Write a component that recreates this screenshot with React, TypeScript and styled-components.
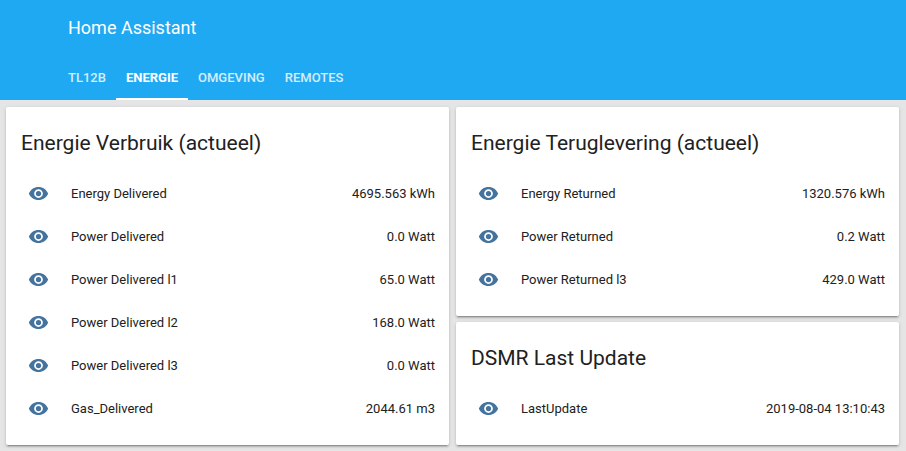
import React from "react";
import styled, { createGlobalStyle } from "styled-components";

const GlobalStyle = createGlobalStyle`
  * { box-sizing: border-box; }
  body {
    margin: 0;
    background: #e5e5e5;
    color: #212121;
    font-family: Roboto, "Noto Sans", sans-serif;
    font-size: 13px;
    -webkit-font-smoothing: antialiased;
  }
`;

const Header = styled.header`
  background: #1fa9f2;
  color: #fff;
  padding-left: 58px;
`;

const AppTitle = styled.div`
  padding: 0 10px;
  font-size: 18px;
  line-height: 56px;
`;

const Tabs = styled.nav`
  display: flex;
`;

const Tab = styled.button<{ $active: boolean }>`
  border: 0;
  background: none;
  box-shadow: ${(p) => (p.$active ? "inset 0 -2px #fff" : "none")};
  color: #fff;
  padding: 0 10px;
  font-family: inherit;
  font-size: 13px;
  line-height: 44px;
  font-weight: ${(p) => (p.$active ? 700 : 500)};
  opacity: ${(p) => (p.$active ? 1 : 0.8)};
  text-transform: uppercase;
  cursor: pointer;
`;

const Board = styled.main`
  display: grid;
  grid-template-columns: 1fr 1fr;
  align-items: start;
  gap: 7px;
  padding: 7px 7px 5px 6px;
`;

const Column = styled.div`
  display: flex;
  flex-direction: column;
  gap: 6px;
`;

const CardBox = styled.section`
  background: #fff;
  border-radius: 2px;
  padding: 0 14px 19px 15px;
  box-shadow: 0 2px 2px rgba(0, 0, 0, 0.14), 0 1px 4px rgba(0, 0, 0, 0.12),
    0 3px 1px -2px rgba(0, 0, 0, 0.2);
`;

const CardTitle = styled.h2`
  margin: 0;
  padding: 18px 0 14px;
  font-size: 21px;
  line-height: 36px;
  font-weight: 400;
`;

const Rows = styled.ul`
  margin: 0;
  padding: 0;
  list-style: none;
  display: grid;
  gap: 7px;
`;

const Row = styled.li`
  display: flex;
  align-items: center;
  height: 36px;
  padding-left: 7px;
`;

const Eye = styled.svg`
  width: 21px;
  height: 21px;
  margin-right: 22px;
  fill: #44739e;
`;

const Name = styled.span`
  flex: 1;
`;

type Entity = [string, string];

function Card({ title, rows }: { title: string; rows: Entity[] }) {
  return (
    <CardBox>
      <CardTitle>{title}</CardTitle>
      <Rows>
        {rows.map(([name, value]) => (
          <Row key={name}>
            <Eye viewBox="0 0 24 24" aria-hidden="true">
              <path d="M12,9A3,3 0 0,0 9,12A3,3 0 0,0 12,15A3,3 0 0,0 15,12A3,3 0 0,0 12,9M12,17A5,5 0 0,1 7,12A5,5 0 0,1 12,7A5,5 0 0,1 17,12A5,5 0 0,1 12,17M12,4.5C7,4.5 2.73,7.61 1,12C2.73,16.39 7,19.5 12,19.5C17,19.5 21.27,16.39 23,12C21.27,7.61 17,4.5 12,4.5Z" />
            </Eye>
            <Name>{name}</Name>
            <span>{value}</span>
          </Row>
        ))}
      </Rows>
    </CardBox>
  );
}

const consumption: Entity[] = [
  ["Energy Delivered", "4695.563 kWh"],
  ["Power Delivered", "0.0 Watt"],
  ["Power Delivered l1", "65.0 Watt"],
  ["Power Delivered l2", "168.0 Watt"],
  ["Power Delivered l3", "0.0 Watt"],
  ["Gas_Delivered", "2044.61 m3"],
];

const returned: Entity[] = [
  ["Energy Returned", "1320.576 kWh"],
  ["Power Returned", "0.2 Watt"],
  ["Power Returned l3", "429.0 Watt"],
];

const tabs = ["TL12B", "Energie", "Omgeving", "Remotes"];

export default function App() {
  const [active, setActive] = React.useState("Energie");
  return (
    <>
      <GlobalStyle />
      <Header>
        <AppTitle>Home Assistant</AppTitle>
        <Tabs>
          {tabs.map((tab) => (
            <Tab key={tab} $active={tab === active} onClick={() => setActive(tab)}>
              {tab}
            </Tab>
          ))}
        </Tabs>
      </Header>
      <Board>
        <Column>
          <Card title="Energie Verbruik (actueel)" rows={consumption} />
        </Column>
        <Column>
          <Card title="Energie Teruglevering (actueel)" rows={returned} />
          <Card title="DSMR Last Update" rows={[["LastUpdate", "2019-08-04 13:10:43"]]} />
        </Column>
      </Board>
    </>
  );
}
